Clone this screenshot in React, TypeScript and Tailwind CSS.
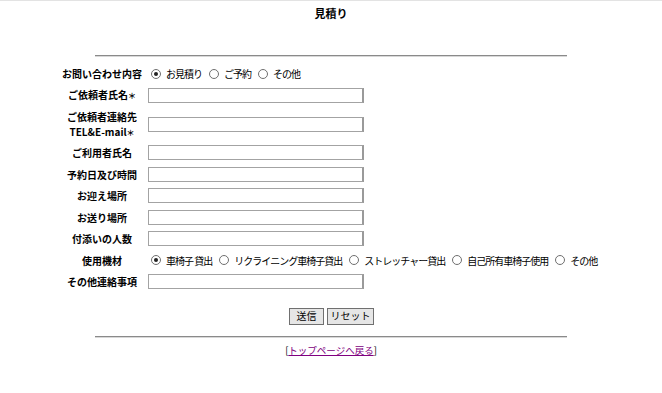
import React from "react";

const font = { fontFamily: '"Noto Sans CJK JP", "Noto Sans", sans-serif' };

function Radio({ checked }: { checked?: boolean }) {
  return (
    <span className="inline-flex h-[10px] w-[10px] shrink-0 items-center justify-center rounded-full border border-[#6f6f6f] bg-white">
      {checked ? <span className="h-[4px] w-[4px] rounded-full bg-[#222]" /> : null}
    </span>
  );
}

function RadioGroup({ items }: { items: string[] }) {
  return (
    <div className="flex items-center gap-[7px] pl-[3px] text-[10px] font-normal tracking-[-1px] text-black">
      {items.map((t, i) => (
        <span key={t} className="flex items-center gap-[5px]">
          <Radio checked={i === 0} />
          <span>{t}</span>
        </span>
      ))}
    </div>
  );
}

function TextInput() {
  return <div className="h-[15px] w-[216px] border border-[#a3a3a3] border-r-2 border-r-[#9a9a9a] bg-white" />;
}

function Row({ label, children, tall }: { label: React.ReactNode; children: React.ReactNode; tall?: boolean }) {
  return (
    <div className={`flex items-center ${tall ? "h-[36px]" : "h-[21.5px]"}`}>
      <div className="w-[88px] text-center text-[10px] font-bold leading-[15px] text-black">{label}</div>
      <div className="ml-[2px]">{children}</div>
    </div>
  );
}

function Star() {
  return <span className="text-[8px]">＊</span>;
}

export default function App() {
  return (
    <div className="min-h-[393px] w-[662px] border-t border-[#e3e3e3] bg-white" style={font}>
      <div className="pt-[4px] text-center text-[11px] font-bold leading-[16px] text-black">見積り</div>
      <div className="mx-[95px] mt-[34px] h-[2px] border-t border-[#8a8a8a] border-b border-b-[#d8d8d8]" />
      <div className="ml-[58px] mt-[6px] flex flex-col">
        <Row label="お問い合わせ内容">
          <RadioGroup items={["お見積り", "ご予約", "その他"]} />
        </Row>
        <Row label={<>ご依頼者氏名<Star /></>}>
          <TextInput />
        </Row>
        <Row
          tall
          label={
            <>
              <div>ご依頼者連絡先</div>
              <div>TEL&amp;E-mail<Star /></div>
            </>
          }
        >
          <TextInput />
        </Row>
        <Row label="ご利用者氏名">
          <TextInput />
        </Row>
        <Row label="予約日及び時間">
          <TextInput />
        </Row>
        <Row label="お迎え場所">
          <TextInput />
        </Row>
        <Row label="お送り場所">
          <TextInput />
        </Row>
        <Row label="付添いの人数">
          <TextInput />
        </Row>
        <Row label="使用機材">
          <RadioGroup items={["車椅子 貸出", "リクライニング車椅子貸出", "ストレッチャー貸出", "自己所有車椅子使用", "その他"]} />
        </Row>
        <Row label="その他連絡事項">
          <TextInput />
        </Row>
      </div>
      <div className="mt-[15px] flex justify-center gap-[3px] pl-[1px]">
        <button className="h-[17px] w-[35px] border border-[#707070] bg-[#e6e6e6] text-[10px] leading-[14px] text-black">送信</button>
        <button className="h-[17px] w-[47px] border border-[#707070] bg-[#e6e6e6] text-[10px] leading-[14px] text-black">リセット</button>
      </div>
      <div className="mx-[95px] mt-[11px] h-[2px] border-t border-[#8a8a8a] border-b border-b-[#d8d8d8]" />
      <div className="mt-[5px] text-center text-[9.5px] leading-[14px] text-black">
        [<a href="#" className="text-[#800080] underline">トップページへ戻る</a>]
      </div>
    </div>
  );
}
